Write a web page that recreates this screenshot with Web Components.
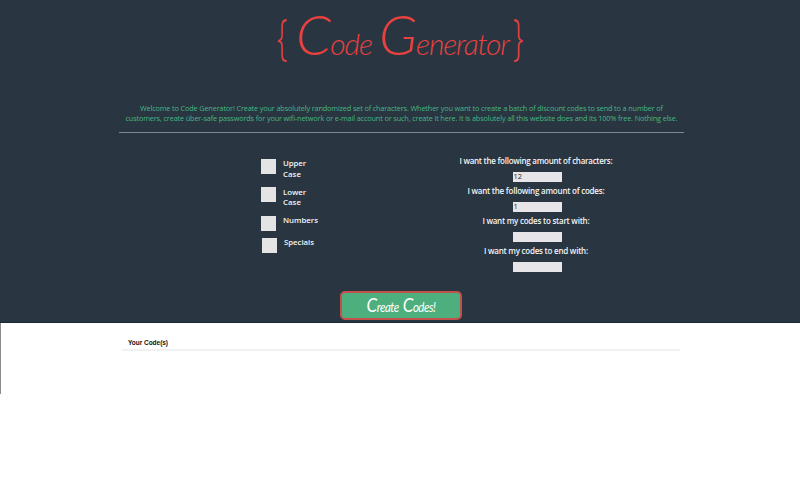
<!DOCTYPE html>
<html lang="en">
<head>
<meta charset="utf-8">
<title>Code Generator</title>
<style>
html,body{margin:0;background:#fff}
body{font-family:"Open Sans","Noto Sans",sans-serif;width:800px;height:500px;overflow:hidden}
</style>
</head>
<body>
<code-generator></code-generator>
<script>
/* One line of text whose letter spacing is tuned to a given width. */
customElements.define('fit-line', class extends HTMLElement {
  connectedCallback() {
    const root = this.attachShadow({mode: 'open'});
    root.innerHTML = `<style>:host{display:block;white-space:nowrap}span{display:inline-block}</style><span></span>`;
    const s = root.querySelector('span');
    s.textContent = this.getAttribute('text');
    const w = +this.getAttribute('width');
    const now = s.getBoundingClientRect().width;
    const gap = (w - now) / s.textContent.length;
    s.style.letterSpacing = gap + 'px';
    s.style.marginRight = -gap + 'px';
  }
});

customElements.define('site-title', class extends HTMLElement {
  connectedCallback() {
    this.attachShadow({mode: 'open'}).innerHTML = `<style>
      :host{display:block;height:76px;color:#e8413f;font-family:Lato,sans-serif;font-style:italic;font-weight:300}
      h1{margin:0;padding-left:277px;display:flex;align-items:flex-start;font-weight:300;font-size:30px;line-height:60px;white-space:pre}
      .brace{font:300 46px/64px "Open Sans",sans-serif;width:18px;height:64px;transform-origin:0 50%;transform:scale(.63,1.09);margin-top:3px}
      .word{display:block;height:60px;margin-top:4px}
      .word::first-letter{font-size:56px;line-height:60px}
      .code{width:83px;letter-spacing:-1px;margin-left:1px}
      .gen{width:134px;letter-spacing:-1.2px}
    </style><h1><span class="brace">{</span><span class="word code">Code</span><span class="word gen">Generator</span><span class="brace">}</span></h1>`;
  }
});

customElements.define('option-box', class extends HTMLElement {
  connectedCallback() {
    this.attachShadow({mode: 'open'}).innerHTML = `<style>
      :host{display:flex;gap:7px;color:#f4f4f4;font-size:7.8px;line-height:10.4px;font-weight:600}
      i{width:15px;height:15px;background:#e4e4e4;flex:none}
      div{margin-top:-.6px}
    </style><i></i><div><slot></slot></div>`;
  }
});

customElements.define('code-field', class extends HTMLElement {
  connectedCallback() {
    this.attachShadow({mode: 'open'}).innerHTML = `<style>
      :host{display:flex;flex-direction:column;align-items:center;height:30.1px;color:#f4f4f4;font-size:8px;font-weight:600;line-height:12px}
      div{box-sizing:border-box;width:49px;height:10px;margin:5px 0 0 2px;background:#e7e5e7;color:#222;padding-left:1px;font-weight:400;font-size:7.5px;line-height:9px}
    </style><fit-line text="${this.getAttribute('label')}" width="${this.getAttribute('width')}"></fit-line><div>${this.getAttribute('value') || ''}</div>`;
  }
});

customElements.define('create-button', class extends HTMLElement {
  connectedCallback() {
    this.attachShadow({mode: 'open'}).innerHTML = `<style>
      :host{display:block;width:122px;height:29px}
      button{all:unset;box-sizing:border-box;display:flex;justify-content:center;gap:4px;width:122px;height:29px;border:2px solid #c3504a;border-radius:5px;background:#4caf7d;color:#fff;font:italic 400 11.5px/23px Lato,sans-serif}
      span{display:block;letter-spacing:-.5px;transform:scaleY(1.1)}
      span::first-letter{font-size:17px;line-height:23px}
    </style><button><span>Create</span><span>Codes!</span></button>`;
  }
});

customElements.define('result-panel', class extends HTMLElement {
  connectedCallback() {
    this.attachShadow({mode: 'open'}).innerHTML = `<style>
      :host{display:block;height:177px;padding-left:122px;box-sizing:border-box;background:linear-gradient(#8b8b8b,#8b8b8b) 0 0/1px 71px no-repeat #fff}
      section{width:558px;height:28px;box-sizing:border-box;border-bottom:2px solid #f1f1f1;padding:14px 0 0 6px;color:#111;font:bold 6.5px/12px "Liberation Sans",Arial,sans-serif}
    </style><section><fit-line text="Your Code(s)" width="40"></fit-line></section>`;
  }
});

customElements.define('code-generator', class extends HTMLElement {
  connectedCallback() {
    this.attachShadow({mode: 'open'}).innerHTML = `<style>
      :host{display:block}
      main{height:323px;box-sizing:border-box;background:#293541;border-bottom:1px solid #1c2833;display:flex;flex-direction:column}
      .intro{margin:27px 116px 0 119px;height:29px;border-bottom:1px solid #7f898d;color:#45b883;font-size:7.3px;line-height:10.4px;display:flex;flex-direction:column;align-items:center}
      .form{display:grid;grid-template-columns:261px 175px 200px;height:158px;box-sizing:border-box;padding-top:22px}
      .options{grid-column:2;padding-top:4px}
      .options option-box{height:28.3px}
      .options option-box:nth-child(3){height:22px}
      .options option-box:nth-child(4){margin-left:1px}
      create-button{margin-left:340px}
    </style>
    <main>
      <site-title></site-title>
      <div class="intro">
        <fit-line width="523" text="Welcome to Code Generator! Create your absolutely randomized set of characters. Whether you want to create a batch of discount codes to send to a number of"></fit-line>
        <fit-line width="552" text="customers, create über-safe passwords for your wifi-network or e-mail account or such, create it here. It is absolutely all this website does and its 100% free. Nothing else."></fit-line>
      </div>
      <div class="form">
        <div class="options">
          <option-box><fit-line text="Upper" width="23"></fit-line><fit-line text="Case" width="18"></fit-line></option-box>
          <option-box><fit-line text="Lower" width="23"></fit-line><fit-line text="Case" width="18"></fit-line></option-box>
          <option-box><fit-line text="Numbers" width="35"></fit-line></option-box>
          <option-box><fit-line text="Specials" width="30"></fit-line></option-box>
        </div>
        <div>
          <code-field label="I want the following amount of characters:" width="153" value="12"></code-field>
          <code-field label="I want the following amount of codes:" width="137" value="1"></code-field>
          <code-field label="I want my codes to start with:" width="107"></code-field>
          <code-field label="I want my codes to end with:" width="104"></code-field>
        </div>
      </div>
      <create-button></create-button>
    </main>
    <result-panel></result-panel>`;
  }
});
</script>
</body>
</html>
